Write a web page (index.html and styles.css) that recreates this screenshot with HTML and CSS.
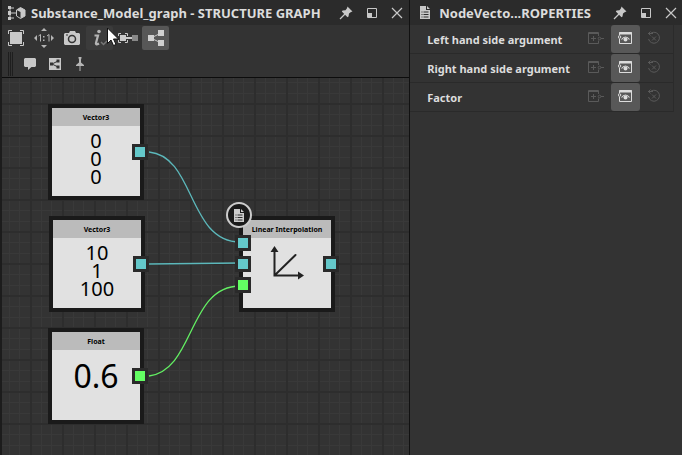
FILE: index.html
```html
<!DOCTYPE html>
<html lang="en">
<head>
    <meta charset="UTF-8">
    <meta name="viewport" content="width=device-width, initial-scale=1.0">
    <title>Substance_Model_graph</title>
    <link rel="stylesheet" href="styles.css">
</head>
<body>
    <!-- shared icons -->
    <svg class="icon-defs" aria-hidden="true">
        <symbol id="pin" viewBox="0 0 14 14">
            <path d="M8.5 0.5 L13.5 5.5 L12 6 L10 7.5 L9.5 10.5 L8.5 11.2 L2.8 5.6 L3.6 4.6 L6.5 4.2 L8 2.2Z" fill="currentColor"/>
            <path d="M6 8 L1 13" stroke="currentColor" stroke-width="1.2"/>
        </symbol>
        <symbol id="dock" viewBox="0 0 10 10">
            <path d="M0.5 0.5h9v9h-9z" fill="none" stroke="currentColor"/>
            <path d="M1 5h4v4h-4z" fill="currentColor"/>
        </symbol>
        <symbol id="close" viewBox="0 0 12 12">
            <path d="M1 1L11 11M11 1L1 11" stroke="currentColor" stroke-width="1.2"/>
        </symbol>
        <symbol id="doc" viewBox="0 0 10 13">
            <path d="M0 0h6v4h4v9H0z M7 0l3 3H7z" fill="currentColor"/>
            <path d="M1.5 6h1M3.5 6h5M1.5 8.5h1M3.5 8.5h5M1.5 11h1M3.5 11h5" stroke="#2b2b2b"/>
        </symbol>
        <symbol id="expose" viewBox="0 0 16 12">
            <path d="M10.5 4V.5H.5v11h10V8.500M.5 1.500h10M3 6.500h5M5.500 4v5M13 6.500h3" fill="none" stroke="currentColor"/>
            <circle cx="11.500" cy="6.500" r="1.300" fill="none" stroke="currentColor"/>
        </symbol>
        <symbol id="eye" viewBox="0 0 14 12">
            <path d="M1.500 3V.5h12v11h-12V7" fill="none" stroke="currentColor"/>
            <path d="M1 1.500h13" stroke="currentColor" stroke-width="2"/>
            <circle cx="1.500" cy="5" r="1.300" fill="none" stroke="currentColor"/>
            <path d="M3.500 7.500Q7.500 2.500 11.500 7.500" fill="none" stroke="currentColor" stroke-width="1.200"/>
            <circle cx="7.500" cy="7.500" r="2" fill="currentColor"/>
        </symbol>
        <symbol id="reset" viewBox="0 0 14 14">
            <path d="M2.500 3.500A5.500 5.500 0 1 1 1.600 8M1 2.500h5M3.500 .5L1.500 2.500L3.500 4.500" fill="none" stroke="currentColor"/>
            <path d="M5 5.500l4 4M9 5.500l-4 4" stroke="currentColor"/>
        </symbol>
    </svg>

    <div class="workspace">
        <section class="panel graph-panel">
            <header class="panel-header">
                <svg class="title-icon graph-icon" viewBox="0 0 18 14">
                    <path d="M2 2h4M2 2v10h4M2 7h6" fill="none" stroke="#c8c8c8"/>
                    <path d="M0 0h3v3H0zM0 5h3v4H0zM0 11h3v3H0z" fill="#c8c8c8"/>
                    <path d="M12.500 1.500l4.500 2.500v6l-4.500 2.500L8.500 10V4z" fill="#2b2b2b" stroke="#c8c8c8"/>
                    <path d="M8.500 4l4-2.500L17 4v6l-4.500 2.500V6z" fill="#c8c8c8"/>
                </svg>
                <h1 class="panel-title">Substance_Model_graph - STRUCTURE GRAPH</h1>
                <div class="panel-actions">
                    <button class="action" aria-label="Pin"><svg width="14" height="14"><use href="#pin"/></svg></button>
                    <button class="action" aria-label="Undock"><svg width="10" height="10"><use href="#dock"/></svg></button>
                    <button class="action" aria-label="Close"><svg width="12" height="12"><use href="#close"/></svg></button>
                </div>
            </header>

            <div class="toolbar">
                <button class="tool" aria-label="Fit view">
                    <svg width="16" height="16" viewBox="0 0 16 16"><path d="M.5 4V.5H4M12 .5h3.500V4M15.500 12v3.500H12M4 15.500H.5V12" fill="none" stroke="#c8c8c8"/><path d="M2 2h12v12H2z" fill="#c8c8c8"/></svg>
                </button>
                <button class="tool" aria-label="Actual size">
                    <svg width="20" height="20" viewBox="0 0 20 20" fill="#b4b4b4"><path d="M10 0l3 3H7zM10 20l3-3H7zM0 10l3-3v6zM20 10l-3-3v6z"/><path d="M4.500 8l2-1.500V13.500M13 8l2-1.500V13.500" fill="none" stroke="#b4b4b4"/><path d="M9 8h1.500v1.500H9zM9 11.500h1.500V13H9z"/></svg>
                </button>
                <button class="tool" aria-label="Screenshot">
                    <svg width="16" height="14" viewBox="0 0 16 14"><path d="M1 2h4l1-2h5l1 2h3l1 1v10l-1 1H1l-1-1V3z" fill="#c8c8c8"/><circle cx="8" cy="8" r="3.500" fill="none" stroke="#333" stroke-width="1.500"/><path d="M2 4h2" stroke="#333"/></svg>
                </button>
                <button class="tool tool-hover" aria-label="Information">
                    <svg width="16" height="18" viewBox="0 0 16 18"><circle cx="7" cy="2.500" r="1.800" fill="#b4b4b4"/><path d="M2.500 6.500h3.500L4 14q-.500 2.500 3 .500" fill="none" stroke="#b4b4b4" stroke-width="2.200"/><path d="M9 13l2.500 2.500L15 12" fill="none" stroke="#777" stroke-width="1.500"/></svg>
                </button>
                <button class="tool" aria-label="Link nodes">
                    <svg width="20" height="12" viewBox="0 0 20 12"><path d="M.5 4V1.500H3M7 1.500h2.500V4M.5 8v2.500H3M7 10.500h2.500V8" fill="none" stroke="#c8c8c8"/><path d="M2 3h6v6H2z" fill="#c8c8c8"/><path d="M8 6h7" stroke="#c8c8c8" stroke-width="2"/><path d="M14 3h6v6h-6z" fill="#888"/></svg>
                </button>
                <button class="tool tool-active" aria-label="Connections">
                    <svg width="16" height="16" viewBox="0 0 16 16"><path d="M3 8l10-5M3 8l10 5" stroke="#c8c8c8"/><path d="M0 5h6v6H0zM10 0h6v6h-6zM10 10h6v6h-6z" fill="#d0d0d0"/></svg>
                </button>
            </div>
            <div class="toolbar toolbar-small">
                <span class="grip"></span>
                <button class="tool" aria-label="Comment">
                    <svg width="12" height="12" viewBox="0 0 12 12"><path d="M1 0h10l1 1v7l-1 1H7.500L4 12V9H1L0 8V1z" fill="#c8c8c8"/></svg>
                </button>
                <button class="tool" aria-label="Frame">
                    <svg width="12" height="12" viewBox="0 0 12 12"><path d="M0 0h12v12H0z" fill="#c8c8c8"/><path d="M3 6l6-3M3 6l6 3" stroke="#333"/><path d="M1 4.500h3v3H1zM7.500 1.500h3v3h-3zM7.500 7.500h3v3h-3z" fill="#333"/></svg>
                </button>
                <button class="tool" aria-label="Navigation pin">
                    <svg width="8" height="14" viewBox="0 0 8 14"><path d="M2.500 0h3v1L5 2.500v3L8 8v1H0V8l3-2.500v-3L2.500 1z" fill="#b4b4b4"/><path d="M4 8v6" stroke="#b4b4b4"/></svg>
                </button>
            </div>

            <div class="canvas">
                <svg class="wires" fill="none" stroke-width="1.300">
                    <path d="M147 74C193 78 186 164 238 164" stroke="#5cb8bb"/>
                    <path d="M147 186L238 185" stroke="#5cb8bb"/>
                    <path d="M147 298C193 292 186 208 238 208" stroke="#63f063"/>
                </svg>

                <article class="node node-a">
                    <h2 class="node-title">Vector3</h2>
                    <div class="node-value">0<br>0<br>0</div>
                    <div class="ports ports-out"><i class="port"></i></div>
                </article>
                <article class="node node-b">
                    <h2 class="node-title">Vector3</h2>
                    <div class="node-value">10<br>1<br>100</div>
                    <div class="ports ports-out"><i class="port"></i></div>
                </article>
                <article class="node node-c">
                    <h2 class="node-title">Float</h2>
                    <div class="node-value node-value-large">0.6</div>
                    <div class="ports ports-out"><i class="port port-float"></i></div>
                </article>
                <article class="node node-lerp">
                    <h2 class="node-title">Linear Interpolation</h2>
                    <div class="node-icon">
                        <svg width="34" height="34" viewBox="0 0 34 34"><path d="M4.500 4v25.500H30M4.500 29.500L25.500 9" fill="none" stroke="#222" stroke-width="2" stroke-linecap="round"/><path d="M4.500 0l4 6h-8zM34 29.500l-6-4v8z" fill="#222"/></svg>
                    </div>
                    <div class="ports ports-in"><i class="port"></i><i class="port"></i><i class="port port-float"></i></div>
                    <div class="ports ports-out"><i class="port"></i></div>
                    <span class="badge"><svg width="10" height="13"><use href="#doc"/></svg></span>
                </article>
            </div>

            <svg class="cursor" viewBox="0 0 12 19"><path d="M.5 1v15.500L4 13l2.500 5.500 2.500-1L6.500 12H11.500z" fill="#fff" stroke="#111"/></svg>
        </section>

        <section class="panel properties-panel">
            <header class="panel-header">
                <svg class="title-icon" width="10" height="13"><use href="#doc"/></svg>
                <h1 class="panel-title">NodeVecto...ROPERTIES</h1>
                <div class="panel-actions">
                    <button class="action" aria-label="Pin"><svg width="14" height="14"><use href="#pin"/></svg></button>
                    <button class="action" aria-label="Undock"><svg width="10" height="10"><use href="#dock"/></svg></button>
                    <button class="action" aria-label="Close"><svg width="12" height="12"><use href="#close"/></svg></button>
                </div>
            </header>
            <div class="properties">
                <div class="property">
                    <span class="property-name">Left hand side argument</span>
                    <button class="prop-btn" aria-label="Expose" disabled><svg width="16" height="12"><use href="#expose"/></svg></button>
                    <button class="prop-btn prop-btn-on" aria-label="Visible"><svg width="14" height="12"><use href="#eye"/></svg></button>
                    <button class="prop-btn" aria-label="Reset" disabled><svg width="14" height="14"><use href="#reset"/></svg></button>
                </div>
                <div class="property">
                    <span class="property-name">Right hand side argument</span>
                    <button class="prop-btn" aria-label="Expose" disabled><svg width="16" height="12"><use href="#expose"/></svg></button>
                    <button class="prop-btn prop-btn-on" aria-label="Visible"><svg width="14" height="12"><use href="#eye"/></svg></button>
                    <button class="prop-btn" aria-label="Reset" disabled><svg width="14" height="14"><use href="#reset"/></svg></button>
                </div>
                <div class="property">
                    <span class="property-name">Factor</span>
                    <button class="prop-btn" aria-label="Expose" disabled><svg width="16" height="12"><use href="#expose"/></svg></button>
                    <button class="prop-btn prop-btn-on" aria-label="Visible"><svg width="14" height="12"><use href="#eye"/></svg></button>
                    <button class="prop-btn" aria-label="Reset" disabled><svg width="14" height="14"><use href="#reset"/></svg></button>
                </div>
            </div>
        </section>
    </div>
</body>
</html>
```
FILE: styles.css
```css
* {
    box-sizing: border-box;
}

body {
    margin: 0;
    background: #333;
    color: #dcdcdc;
    font-family: "Noto Sans", "Open Sans", sans-serif;
}

button {
    padding: 0;
    border: none;
    background: none;
    color: inherit;
}

svg {
    display: block;
}

.icon-defs {
    position: absolute;
    width: 0;
    height: 0;
}

.workspace {
    display: grid;
    grid-template-columns: 3fr 2fr;
    min-height: 100vh;
}

.panel {
    display: flex;
    flex-direction: column;
    position: relative;
    min-width: 0;
}

.graph-panel {
    border-left: 2px solid #1c1c1c;
}

.properties-panel {
    border-left: 1px solid #111;
}

.panel-header {
    display: flex;
    align-items: center;
    height: 25px;
    padding: 0 6px;
    background: #2b2b2b;
}

.properties-panel .panel-header {
    padding-right: 5px;
}

.title-icon {
    flex: none;
    margin: 0 9px 0 4px;
    color: #c8c8c8;
}

.graph-icon {
    width: 18px;
    height: 14px;
    margin: 0 5px 0 0;
}

.panel-title {
    flex: 1;
    margin: 0;
    font-size: 13px;
    line-height: 24px;
    font-weight: 700;
    white-space: nowrap;
}

.panel-actions {
    display: flex;
    gap: 14px;
    color: #c8c8c8;
}

.action {
    display: flex;
    align-items: center;
}

/* toolbars */
.toolbar {
    display: flex;
    align-items: center;
    gap: 1px;
    height: 26px;
}

.tool {
    display: flex;
    align-items: center;
    justify-content: center;
    width: 27px;
    height: 24px;
    border-radius: 2px;
}

.tool-hover {
    background: #3b3b3b;
}

.tool-active {
    background: #575757;
}

.toolbar-small {
    height: 27px;
    padding-left: 6px;
    border-bottom: 1px solid #0c0c0c;
}

.toolbar-small .tool {
    width: 24px;
}

.grip {
    width: 5px;
    height: 24px;
    margin-right: 4px;
    background: repeating-linear-gradient(90deg, #1e1e1e 0 1px, #333 1px 2px);
}

/* graph */
.canvas {
    flex: 1;
    position: relative;
    overflow: hidden;
    background:
        linear-gradient(90deg, #2d2d2d 2px, transparent 2px) 28px 0 / 32px 32px,
        linear-gradient(#2d2d2d 2px, transparent 2px) 0 25px / 32px 32px,
        linear-gradient(90deg, transparent 11px, #393939 11px 12px, transparent 12px 21px, #393939 21px 22px, transparent 22px) 28px 0 / 32px 32px,
        linear-gradient(transparent 11px, #393939 11px 12px, transparent 12px 22px, #393939 22px 23px, transparent 23px) 0 25px / 32px 32px,
        #333;
}

.wires {
    position: absolute;
    inset: 0;
    width: 100%;
    height: 100%;
}

.node {
    position: absolute;
    display: flex;
    flex-direction: column;
    width: 96px;
    height: 96px;
    border: 4px solid #1a1a1a;
    background: #e1e1e1;
    color: #000;
}

.node-a {
    left: 46px;
    top: 26px;
}

.node-b {
    left: 47px;
    top: 138px;
}

.node-c {
    left: 46px;
    top: 250px;
}

.node-lerp {
    left: 237px;
    top: 138px;
}

.node-title {
    margin: 0;
    height: 18px;
    background: #bbb;
    font-size: 7px;
    line-height: 19px;
    font-weight: 700;
    text-align: center;
    white-space: nowrap;
}

.node-value {
    padding-top: 6px;
    font-size: 20px;
    line-height: 18px;
    text-align: center;
}

.node-value-large {
    padding-top: 10px;
    font-size: 32px;
    line-height: 32px;
}

.node-icon {
    display: flex;
    justify-content: center;
    padding-top: 8px;
}

.ports {
    position: absolute;
    top: 0;
    bottom: 0;
    display: flex;
    flex-direction: column;
    justify-content: center;
    gap: 5px;
}

.ports-in {
    left: -8px;
}

.ports-out {
    right: -8px;
}

.port {
    width: 16px;
    height: 16px;
    border: 3px solid #2a2a2a;
    background: #64c8ca;
}

.port-float {
    background: #63ff63;
}

.badge {
    position: absolute;
    left: -17px;
    top: -18px;
    display: flex;
    align-items: center;
    justify-content: center;
    width: 26px;
    height: 26px;
    border: 2px solid #ccc;
    border-radius: 50%;
    background: #1a1a1a;
    color: #ccc;
}

.cursor {
    position: absolute;
    left: 105px;
    top: 27px;
    width: 12px;
    height: 19px;
}

/* properties */
.properties {
    margin-right: 8px;
    border-right: 1px solid #2b2b2b;
}

.property {
    display: flex;
    align-items: center;
    height: 29px;
    padding: 0 4px 0 17px;
    border-bottom: 1px solid #2a2a2a;
}

.property-name {
    flex: 1;
    padding-top: 2px;
    font-size: 11px;
    line-height: 26px;
    font-weight: 700;
    white-space: nowrap;
}

.prop-btn {
    display: flex;
    align-items: center;
    justify-content: center;
    width: 29px;
    height: 28px;
    padding-bottom: 2px;
    border-radius: 3px;
    color: #5a5a5a;
}

.prop-btn-on {
    background: #585858;
    color: #dcdcdc;
}
```
